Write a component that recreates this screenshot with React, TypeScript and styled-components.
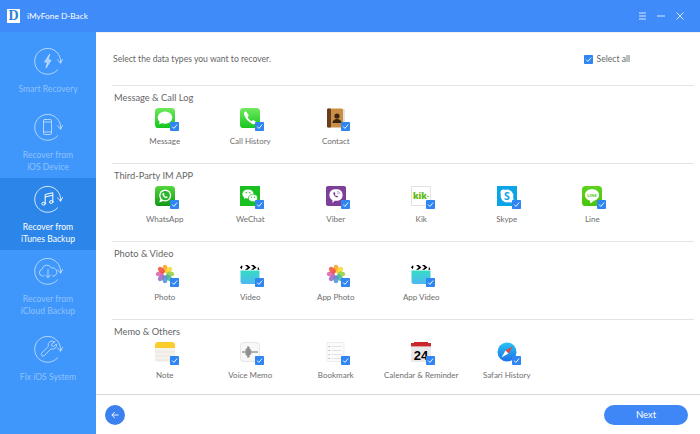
import React, { FC } from "react";
import styled, { createGlobalStyle } from "styled-components";

const GlobalStyle = createGlobalStyle`
  html, body {
    margin: 0;
    padding: 0;
    background: #fff;
  }
  body {
    font-family: Lato, "Open Sans", sans-serif;
  }
`;

type GlyphProps = { children: React.ReactNode };

const RingIcon: FC<GlyphProps> = ({ children }) => (
  <svg width="30" height="30" viewBox="0 0 30 30" fill="none" stroke="#fff" strokeWidth="0.8" strokeLinecap="round" strokeLinejoin="round">
    <path d="M24.6 23.8A13 13 0 1 1 27.6 17" />
    <path d="M24.600 13.800l3 3.400 2-3.800" />
    {children}
  </svg>
);

const sideItems: { lines: string[]; active?: boolean; glyph: React.ReactNode }[] = [
  {
    lines: ["Smart Recovery"],
    glyph: <path d="M16.5 8.5l-5 7.5h3l-1.5 6 5-8h-3l1.5-5.5z" fill="#fff" fillOpacity="0.7" />,
  },
  {
    lines: ["Recover from", "iOS Device"],
    glyph: (
      <>
        <rect x="10.500" y="7.500" width="8" height="15" rx="1.200" />
        <path d="M10.500 10h8M10.500 20h8" />
      </>
    ),
  },
  {
    lines: ["Recover from", "iTunes Backup"],
    active: true,
    glyph: (
      <>
        <path d="M12.200 19.500V10.500l7.600-1.800v9" strokeWidth="1" />
        <path d="M12.200 13l7.600-1.800" strokeWidth="1" />
        <ellipse cx="10.600" cy="19.700" rx="1.700" ry="1.400" strokeWidth="1" />
        <ellipse cx="18.200" cy="18" rx="1.700" ry="1.400" strokeWidth="1" />
      </>
    ),
  },
  {
    lines: ["Recover from", "iCloud Backup"],
    glyph: (
      <>
        <path d="M10.500 20h-1a3.400 3.400 0 0 1-.4-6.700 4.800 4.800 0 0 1 9.200-1.200 3.900 3.900 0 0 1 2.700 7.900h-1.500" />
        <path d="M15 13.500v8M12.500 19l2.500 2.600 2.500-2.600" />
      </>
    ),
  },
  {
    lines: ["Fix iOS System"],
    glyph: (
      <path d="M21.500 7.800l-3 2.600.6 1.600 1.600.5 2.600-2.600a4 4 0 0 1-5.300 5L11.200 21.600a1.700 1.700 0 0 1-2.500-2.400l6.600-6.900a4 4 0 0 1 6.200-4.500z" />
    ),
  },
];

const CheckBox: FC = () => (
  <svg width="9" height="9" viewBox="0 0 9 9">
    <rect width="9" height="9" rx="0.800" fill="#2f86f2" />
    <path d="M2.200 4.600l1.700 1.800 3.200-3.800" fill="none" stroke="#fff" strokeWidth="0.900" />
  </svg>
);

const Tile: FC<{ from: string; to: string; id: string; children: React.ReactNode }> = ({ from, to, id, children }) => (
  <svg width="20" height="20" viewBox="0 0 20 20">
    <defs>
      <linearGradient id={id} x1="0" y1="0" x2="0" y2="1">
        <stop offset="0" stopColor={from} />
        <stop offset="1" stopColor={to} />
      </linearGradient>
    </defs>
    <rect width="20" height="20" rx="3.600" fill={`url(#${id})`} />
    {children}
  </svg>
);

const MessageIcon: FC = () => (
  <Tile id="msg" from="#6ee95c" to="#14c51c">
    <ellipse cx="10" cy="9.600" rx="7.400" ry="6.200" fill="#fff" />
    <path d="M5 13l-1 3.400 4-1.800z" fill="#fff" />
  </Tile>
);

const PhoneIcon: FC = () => (
  <Tile id="call" from="#70ea5e" to="#18c520">
    <path d="M5.200 3.600c-1.100.7-1.500 2-1 3.500 1.300 3.800 4.700 7.300 8.200 8.800 1.500.6 2.900.2 3.700-1 .3-.5.2-.9-.2-1.200l-2.300-1.500c-.4-.2-.8-.2-1.100.2l-.8.9c-1.800-.9-3.300-2.500-4.200-4.300l.9-.8c.3-.3.4-.7.1-1.100L6.300 3.800c-.3-.4-.7-.5-1.100-.2z" fill="#fff" />
  </Tile>
);

const ContactIcon: FC = () => (
  <svg width="20" height="20" viewBox="0 0 20 20">
    <rect x="16" y="1" width="3" height="18" fill="#e3e3e6" />
    <rect x="1" y="0.500" width="16" height="19" rx="1.500" fill="#c98f45" />
    <rect x="1" y="0.500" width="4" height="19" rx="1.200" fill="#6b3d1e" />
    <circle cx="11" cy="8" r="2.600" fill="#3a2412" />
    <path d="M6.500 15c.3-3 2-4 4.500-4s4.200 1 4.500 4z" fill="#3a2412" />
  </svg>
);

const WhatsAppIcon: FC = () => (
  <Tile id="wa" from="#55d63c" to="#119a17">
    <circle cx="10.200" cy="9.600" r="6" fill="#fff" />
    <path d="M4.200 16.500l1.300-4 2.600 2.500z" fill="#fff" />
    <circle cx="10.200" cy="9.600" r="4.700" fill="#2bb52a" />
    <path d="M8 6.800c-.9.800-.8 2 .2 3.400 1.100 1.500 2.500 2.300 3.600 1.900.7-.3 1-.9.800-1.200l-1.300-.7-.6.600c-.7-.3-1.300-.9-1.700-1.700l.5-.6-.6-1.500z" fill="#fff" />
  </Tile>
);

const WeChatIcon: FC = () => (
  <svg width="20" height="20" viewBox="0 0 20 20">
    <rect width="20" height="20" fill="#19c01f" />
    <ellipse cx="8" cy="8" rx="5.600" ry="4.600" fill="#fff" />
    <path d="M4.500 10.500l-.6 2.500 2.700-1.400z" fill="#fff" />
    <ellipse cx="13" cy="12" rx="4.600" ry="3.800" fill="#fff" stroke="#19c01f" strokeWidth="0.700" />
    <circle cx="6.200" cy="6.800" r="0.700" fill="#19c01f" />
    <circle cx="9.800" cy="6.800" r="0.700" fill="#19c01f" />
    <circle cx="11.500" cy="11.200" r="0.600" fill="#19c01f" />
    <circle cx="14.500" cy="11.200" r="0.600" fill="#19c01f" />
  </svg>
);

const ViberIcon: FC = () => (
  <svg width="20" height="20" viewBox="0 0 20 20">
    <rect width="20" height="20" rx="2" fill="#7d3f98" />
    <path d="M10 3.200c4.300 0 6.600 2 6.600 5.800s-2.300 5.800-6.600 5.800l-1.200-.1-2.400 2.300v-2.900c-2-.9-3-2.700-3-5.100 0-3.800 2.300-5.800 6.600-5.800z" fill="#fff" />
    <path d="M7.800 6.200c-.8.600-.7 1.700.2 3 1 1.400 2.300 2.300 3.300 2.100.7-.2 1-.8.800-1.100l-1.200-.8-.6.500c-.6-.3-1.100-.8-1.400-1.500l.5-.5-.6-1.700z" fill="#7d3f98" />
    <path d="M11 5.200c1.500.2 2.600 1.300 2.800 3M11 6.700c.7.100 1.200.6 1.300 1.400" fill="none" stroke="#7d3f98" strokeWidth="0.500" />
  </svg>
);

const KikIcon: FC = () => (
  <svg width="20" height="20" viewBox="0 0 20 20">
    <rect x="0.500" y="0.500" width="19" height="19" fill="#fff" stroke="#e2e2e2" />
    <text x="9" y="12.500" textAnchor="middle" fontFamily="Open Sans, sans-serif" fontWeight="800" fontSize="8.500" fill="#5fb80f">kik</text>
    <circle cx="17" cy="10.500" r="0.800" fill="#5fb80f" />
  </svg>
);

const SkypeIcon: FC = () => (
  <svg width="20" height="20" viewBox="0 0 20 20">
    <rect width="20" height="20" fill="#0ba4e6" />
    <circle cx="10" cy="10" r="6.400" fill="#fff" />
    <circle cx="6.500" cy="6.500" r="3" fill="#fff" />
    <circle cx="13.500" cy="13.500" r="3" fill="#fff" />
    <text x="10" y="13.600" textAnchor="middle" fontFamily="Open Sans, sans-serif" fontWeight="700" fontSize="10.500" fill="#0ba4e6">S</text>
  </svg>
);

const LineIcon: FC = () => (
  <Tile id="line" from="#5ed21a" to="#49c40d">
    <ellipse cx="10" cy="9" rx="7.200" ry="6" fill="#fff" />
    <path d="M8 14.500l.4 3 3.800-3z" fill="#fff" />
    <text x="10" y="10.600" textAnchor="middle" fontFamily="Open Sans, sans-serif" fontWeight="700" fontSize="4.200" fill="#4fc711">LINE</text>
  </Tile>
);

const petals = ["#f9a11b", "#f6d92a", "#8fce3c", "#3fb58f", "#4a8fd8", "#8e6bc6", "#d95fa8", "#ef4c3c"];

const PhotoIcon: FC = () => (
  <svg width="20" height="20" viewBox="0 0 20 20">
    {petals.map((color, i) => (
      <ellipse key={color} cx="10" cy="4.800" rx="2.500" ry="4" fill={color} fillOpacity="0.85" transform={`rotate(${i * 45} 10 10)`} />
    ))}
    <circle cx="10" cy="10" r="1.500" fill="#fff" fillOpacity="0.6" />
  </svg>
);

const VideoIcon: FC = () => (
  <svg width="20" height="20" viewBox="0 0 20 20">
    <defs>
      <linearGradient id="clap" x1="0" y1="0" x2="0" y2="1">
        <stop offset="0" stopColor="#35dcc4" />
        <stop offset="1" stopColor="#4cb8f2" />
      </linearGradient>
    </defs>
    <path d="M0.500 6.500h19V18a2 2 0 0 1-2 2h-15a2 2 0 0 1-2-2z" fill="url(#clap)" />
    <path d="M0 3.500L1.500 1.500 2.500 2 1.800 5.200z M5 1h2.500l3 2.400-3 2.400H5l2.800-2.400z M11 1h2.500l3 2.400-3 2.400H11l2.800-2.400z M18 2.500l1.500 3.300H17.500z" fill="#000" />
  </svg>
);

const NoteIcon: FC = () => (
  <svg width="20" height="20" viewBox="0 0 20 20">
    <rect width="20" height="20" rx="3.400" fill="#f4f2ec" />
    <path d="M0 6V3.400A3.400 3.400 0 0 1 3.400 0h13.200A3.400 3.400 0 0 1 20 3.400V6z" fill="#fbcd2c" />
    <path d="M0 10h20M0 14h20M0 18h20" stroke="#e0ddd6" strokeWidth="0.600" />
  </svg>
);

const VoiceIcon: FC = () => (
  <svg width="20" height="20" viewBox="0 0 20 20">
    <rect x="0.400" y="0.400" width="19.200" height="19.200" rx="3.400" fill="#f7f7f7" stroke="#d5d5d5" strokeWidth="0.600" />
    <path d="M2 10h3M6 7.500v5M7 6v8M8 4v12M9 5v10M10 7v6M11 8.500v3M12 10h6" stroke="#6c6c6c" strokeWidth="1" />
  </svg>
);

const BookmarkIcon: FC = () => (
  <svg width="20" height="20" viewBox="0 0 20 20">
    <rect x="1" y="0.500" width="17" height="19" fill="#fbfbfb" stroke="#e4e4e4" strokeWidth="0.600" />
    <path d="M5.500 4.500h10M5.500 8.500h10M5.500 12.500h10M5.500 16.500h10" stroke="#d8d8d8" strokeWidth="0.700" />
    <path d="M2.500 4.500h1.500M2.500 8.500h1.500" stroke="#a8a8a8" strokeWidth="0.900" />
    <path d="M2.500 12.500h1.500" stroke="#e3a9a0" strokeWidth="0.900" />
    <path d="M2.500 16.500h1.500" stroke="#a8a8a8" strokeWidth="0.900" />
  </svg>
);

const CalendarIcon: FC = () => (
  <svg width="20" height="20" viewBox="0 0 20 20">
    <rect y="1" width="20" height="19" fill="#e9e9e9" />
    <rect y="1" width="20" height="3.400" fill="#c9272c" />
    <rect y="0" x="3" width="14" height="1.400" fill="#c9272c" />
    <text x="10" y="17.600" textAnchor="middle" fontFamily="Liberation Sans, sans-serif" fontWeight="700" fontSize="13" fill="#000">24</text>
  </svg>
);

const SafariIcon: FC = () => (
  <svg width="20" height="20" viewBox="0 0 20 20">
    <defs>
      <linearGradient id="safari" x1="0" y1="0" x2="0" y2="1">
        <stop offset="0" stopColor="#27c4f5" />
        <stop offset="1" stopColor="#1e6fe8" />
      </linearGradient>
    </defs>
    <circle cx="10" cy="10" r="9.500" fill="url(#safari)" />
    <path d="M15.500 4.500L11.500 11.500 8.500 8.500z" fill="#f0413a" />
    <path d="M4.500 15.500L11.500 11.500 8.500 8.500z" fill="#fff" />
  </svg>
);

const sections: { title: string; items: { label: string; icon: FC }[] }[] = [
  {
    title: "Message & Call Log",
    items: [
      { label: "Message", icon: MessageIcon },
      { label: "Call History", icon: PhoneIcon },
      { label: "Contact", icon: ContactIcon },
    ],
  },
  {
    title: "Third-Party IM APP",
    items: [
      { label: "WhatsApp", icon: WhatsAppIcon },
      { label: "WeChat", icon: WeChatIcon },
      { label: "Viber", icon: ViberIcon },
      { label: "Kik", icon: KikIcon },
      { label: "Skype", icon: SkypeIcon },
      { label: "Line", icon: LineIcon },
    ],
  },
  {
    title: "Photo & Video",
    items: [
      { label: "Photo", icon: PhotoIcon },
      { label: "Video", icon: VideoIcon },
      { label: "App Photo", icon: PhotoIcon },
      { label: "App Video", icon: VideoIcon },
    ],
  },
  {
    title: "Memo & Others",
    items: [
      { label: "Note", icon: NoteIcon },
      { label: "Voice Memo", icon: VoiceIcon },
      { label: "Bookmark", icon: BookmarkIcon },
      { label: "Calendar & Reminder", icon: CalendarIcon },
      { label: "Safari History", icon: SafariIcon },
    ],
  },
];

const App: FC = () => {
  return (
    <Root>
      <GlobalStyle />
      <Header>
        <Brand>
          <Logo>D</Logo>
          <AppName>iMyFone D-Back</AppName>
        </Brand>
        <WindowControls>
          <svg width="7" height="8" viewBox="0 0 7 8" stroke="#dbe9ff" strokeWidth="1">
            <path d="M0 1h7M0 4h7M0 7h7" />
          </svg>
          <svg width="8" height="8" viewBox="0 0 8 8" stroke="#dbe9ff" strokeWidth="1">
            <path d="M0 4h8" />
          </svg>
          <svg width="8" height="8" viewBox="0 0 8 8" stroke="#dbe9ff" strokeWidth="1">
            <path d="M0.500 0.500l7 7M7.500 0.500l-7 7" />
          </svg>
        </WindowControls>
      </Header>
      <Body>
        <Sidebar>
          {sideItems.map((item) => (
            <SideItem key={item.lines.join()} $active={item.active}>
              <RingIcon>{item.glyph}</RingIcon>
              <SideLabel>
                {item.lines.map((line) => (
                  <div key={line}>{line}</div>
                ))}
              </SideLabel>
            </SideItem>
          ))}
        </Sidebar>
        <Main>
          <Content>
            <Intro>
              <span>Select the data types you want to recover.</span>
              <SelectAll>
                <CheckBox />
                <span>Select all</span>
              </SelectAll>
            </Intro>
            {sections.map((section) => (
              <Section key={section.title}>
                <SectionTitle>{section.title}</SectionTitle>
                <ItemGrid>
                  {section.items.map(({ label, icon: Icon }) => (
                    <Item key={label}>
                      <IconWrap>
                        <Icon />
                        <Badge>
                          <CheckBox />
                        </Badge>
                      </IconWrap>
                      <ItemLabel>{label}</ItemLabel>
                    </Item>
                  ))}
                </ItemGrid>
              </Section>
            ))}
          </Content>
          <Footer>
            <BackButton aria-label="Back">
              <svg width="8" height="8" viewBox="0 0 8 8" fill="none" stroke="#fff" strokeWidth="0.900">
                <path d="M7.500 4H1M3.800 1L.8 4l3 3" />
              </svg>
            </BackButton>
            <NextButton>Next</NextButton>
          </Footer>
        </Main>
      </Body>
    </Root>
  );
};

export default App;

const Root = styled.div`
  width: 700px;
  height: 434px;
  display: flex;
  flex-direction: column;
  overflow: hidden;
  background: #fff;
`;

const Header = styled.header`
  height: 32px;
  flex: none;
  display: flex;
  align-items: center;
  justify-content: space-between;
  padding: 0 16px 0 7px;
  background: #3f8bf9;
`;

const Brand = styled.div`
  display: flex;
  align-items: center;
  gap: 7px;
`;

const Logo = styled.div`
  width: 13px;
  height: 14px;
  background: #fff;
  color: #2f7fd6;
  font-family: "Liberation Serif", serif;
  font-weight: 700;
  font-size: 14px;
  line-height: 14px;
  text-align: center;
`;

const AppName = styled.div`
  color: #fff;
  font-size: 8.3px;
  line-height: 14px;
`;

const WindowControls = styled.div`
  display: flex;
  align-items: center;
  gap: 11px;
`;

const Body = styled.div`
  flex: 1;
  display: flex;
  min-height: 0;
`;

const Sidebar = styled.nav`
  width: 96px;
  flex: none;
  padding-top: 2px;
  background: #4097fb;
`;

const SideItem = styled.div<{ $active?: boolean }>`
  height: 72px;
  display: flex;
  flex-direction: column;
  align-items: center;
  justify-content: center;
  gap: 7px;
  background: ${({ $active }) => ($active ? "#2c86ea" : "transparent")};
  color: ${({ $active }) => ($active ? "#fff" : "rgba(255, 255, 255, 0.42)")};

  svg {
    opacity: ${({ $active }) => ($active ? 1 : 0.75)};
  }
`;

const SideLabel = styled.div`
  font-size: 8.6px;
  line-height: 12px;
  text-align: center;
`;

const Main = styled.main`
  flex: 1;
  display: flex;
  flex-direction: column;
  min-width: 0;
  border-top: 1px solid #eef2f7;
`;

const Content = styled.div`
  flex: 1;
  min-height: 0;
  overflow: hidden;
  padding: 0 6px 0 16px;
`;

const Intro = styled.div`
  height: 52px;
  display: flex;
  align-items: center;
  justify-content: space-between;
  padding: 0 64px 0 1px;
  font-size: 8.6px;
  color: #666;
`;

const SelectAll = styled.label`
  display: flex;
  align-items: center;
  gap: 4px;
`;

const Section = styled.section`
  height: 78px;
  box-sizing: border-box;
  border-top: 1px solid #e4e4e4;
  padding-top: 5px;
`;

const SectionTitle = styled.h3`
  margin: 0 0 4px 2px;
  font-size: 9.3px;
  line-height: 13px;
  font-weight: 400;
  color: #666;
`;

const ItemGrid = styled.div`
  display: grid;
  grid-template-columns: repeat(6, 85.5px);
  padding-left: 10px;
`;

const Item = styled.div`
  display: flex;
  flex-direction: column;
  align-items: center;
  gap: 7px;
`;

const IconWrap = styled.div`
  position: relative;
  width: 20px;
  height: 20px;

  > svg {
    display: block;
  }
`;

const Badge = styled.div`
  position: absolute;
  right: -4px;
  bottom: -3px;
  width: 9px;
  height: 9px;

  svg {
    display: block;
  }
`;

const ItemLabel = styled.div`
  font-size: 8px;
  line-height: 12px;
  color: #6e6e6e;
  white-space: nowrap;
`;

const Footer = styled.footer`
  height: 40px;
  flex: none;
  box-sizing: border-box;
  border-top: 1px solid #d9d9d9;
  display: flex;
  align-items: center;
  justify-content: space-between;
  padding: 0 12px 0 9px;
`;

const BackButton = styled.button`
  width: 20px;
  height: 20px;
  padding: 0;
  border: 0;
  border-radius: 50%;
  background: #3b82f0;
  display: flex;
  align-items: center;
  justify-content: center;
`;

const NextButton = styled.button`
  width: 84px;
  height: 20px;
  padding: 0;
  border: 0;
  border-radius: 10px;
  background: #3f86f6;
  color: #fff;
  font-family: inherit;
  font-size: 9.5px;
`;
